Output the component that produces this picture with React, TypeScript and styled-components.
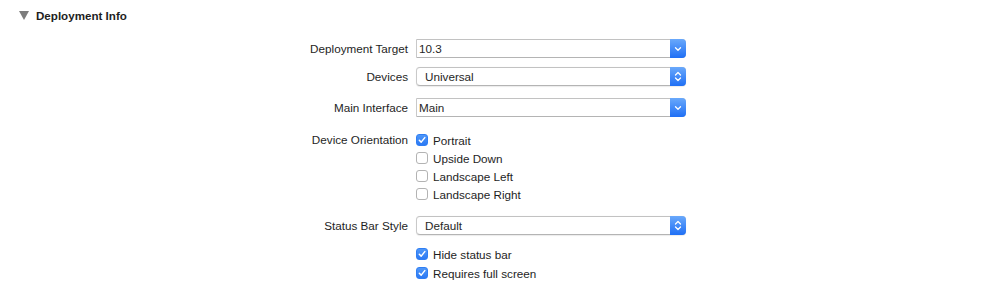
import React from 'react';
import styled, { createGlobalStyle } from 'styled-components';

const GlobalStyle = createGlobalStyle`
  html, body {
    margin: 0;
    padding: 0;
    background: #ffffff;
  }
  body {
    font-family: 'Liberation Sans', Arial, sans-serif;
    font-size: 12px;
    color: #262626;
    -webkit-font-smoothing: antialiased;
  }
`;

const Page = styled.div`
  width: 1008px;
  height: 292px;
  display: flex;
  flex-flow: column nowrap;
`;

const Header = styled.div`
  height: 30px;
  display: flex;
  flex-flow: row nowrap;
  align-items: center;
  padding-left: 19px;
  gap: 7px;
`;

const Disclosure = styled.svg`
  width: 10px;
  height: 9px;
  margin-top: 1px;
`;

const HeaderTitle = styled.span`
  font-weight: bold;
  font-size: 11.6px;
  color: #1e1e1e;
`;

const Row = styled.div<{ mt: number; h?: number; top?: boolean }>`
  margin-top: ${(p) => p.mt}px;
  display: grid;
  grid-template-columns: 408px 270px;
  column-gap: 8px;
  align-items: ${(p) => (p.top ? 'start' : 'center')};
  height: ${(p) => (p.h ? `${p.h}px` : 'auto')};
`;

const Label = styled.span<{ lh?: number }>`
  text-align: right;
  font-size: 11.7px;
  color: #1e1e1e;
  line-height: ${(p) => (p.lh ? `${p.lh}px` : 'normal')};
`;

const FieldBox = styled.div<{ popup?: boolean }>`
  position: relative;
  height: 19px;
  box-sizing: border-box;
  background: #ffffff;
  border: 1px solid #c9c9c9;
  border-top-color: #c2c2c2;
  border-bottom-color: #b4b4b4;
  border-radius: ${(p) => (p.popup ? '4px' : '0 4px 4px 0')};
  box-shadow: ${(p) => (p.popup ? '0 0.5px 1px rgba(0,0,0,0.08)' : 'none')};
  display: flex;
  flex-flow: row nowrap;
  align-items: center;
  padding-left: ${(p) => (p.popup ? '8px' : '2px')};
`;

const FieldText = styled.span`
  flex: 1;
  font-size: 11.7px;
  color: #262626;
`;

const BlueButton = styled.div`
  position: absolute;
  top: -1px;
  right: -1px;
  bottom: -1px;
  width: 16px;
  border-radius: 0 4px 4px 0;
  background: linear-gradient(#6aa9fb, #1f6ff5);
  display: flex;
  align-items: center;
  justify-content: center;
`;

const Checks = styled.div<{ gap?: number }>`
  display: flex;
  flex-flow: column nowrap;
  gap: ${(p) => (p.gap ? `${p.gap}px` : '0')};
`;

const CheckRow = styled.label`
  height: 18px;
  display: flex;
  flex-flow: row nowrap;
  align-items: center;
  gap: 5px;
  font-size: 11.7px;
  color: #1e1e1e;
`;

const Box = styled.span<{ checked?: boolean }>`
  width: 12px;
  height: 12px;
  box-sizing: border-box;
  border-radius: 3px;
  border: 1px solid ${(p) => (p.checked ? '#2f7ef4' : '#b3b3b3')};
  background: ${(p) => (p.checked ? 'linear-gradient(#4f97f8, #2b79f4)' : '#ffffff')};
  display: flex;
  align-items: center;
  justify-content: center;
`;

const Chevron = ({ double }: { double?: boolean }) =>
  double ? (
    <svg width="8" height="11" viewBox="0 0 8 11">
      <path d="M1.5 4 L4 1.5 L6.5 4" fill="none" stroke="#fff" strokeWidth="1.3" strokeLinecap="round" strokeLinejoin="round" />
      <path d="M1.5 7 L4 9.5 L6.5 7" fill="none" stroke="#fff" strokeWidth="1.3" strokeLinecap="round" strokeLinejoin="round" />
    </svg>
  ) : (
    <svg width="8" height="6" viewBox="0 0 8 6">
      <path d="M1.5 1.8 L4 4.3 L6.5 1.8" fill="none" stroke="#fff" strokeWidth="1.3" strokeLinecap="round" strokeLinejoin="round" />
    </svg>
  );

const Field = ({ value, popup }: { value: string; popup?: boolean }) => (
  <FieldBox popup={popup}>
    <FieldText>{value}</FieldText>
    <BlueButton>
      <Chevron double={popup} />
    </BlueButton>
  </FieldBox>
);

const Check = ({ label, checked }: { label: string; checked?: boolean }) => (
  <CheckRow>
    <Box checked={checked}>
      {checked && (
        <svg width="8" height="8" viewBox="0 0 8 8">
          <path d="M1.3 4.2 L3.2 6.1 L6.8 1.6" fill="none" stroke="#fff" strokeWidth="1.5" strokeLinecap="round" strokeLinejoin="round" />
        </svg>
      )}
    </Box>
    {label}
  </CheckRow>
);

const App = () => (
  <>
    <GlobalStyle />
    <Page>
      <Header>
        <Disclosure viewBox="0 0 10 9">
          <path d="M0 0 H10 L5 9 Z" fill="#7d7d7d" />
        </Disclosure>
        <HeaderTitle>Deployment Info</HeaderTitle>
      </Header>

      <Row mt={9} h={19}>
        <Label>Deployment Target</Label>
        <Field value="10.3" />
      </Row>
      <Row mt={9} h={19}>
        <Label>Devices</Label>
        <Field value="Universal" popup />
      </Row>
      <Row mt={12} h={19}>
        <Label>Main Interface</Label>
        <Field value="Main" />
      </Row>

      <Row mt={14} top>
        <Label lh={18}>Device Orientation</Label>
        <Checks>
          <Check label="Portrait" checked />
          <Check label="Upside Down" />
          <Check label="Landscape Left" />
          <Check label="Landscape Right" />
        </Checks>
      </Row>

      <Row mt={13} h={19}>
        <Label>Status Bar Style</Label>
        <Field value="Default" popup />
      </Row>

      <Row mt={10} top>
        <span />
        <Checks gap={1}>
          <Check label="Hide status bar" checked />
          <Check label="Requires full screen" checked />
        </Checks>
      </Row>
    </Page>
  </>
);

export default App;
